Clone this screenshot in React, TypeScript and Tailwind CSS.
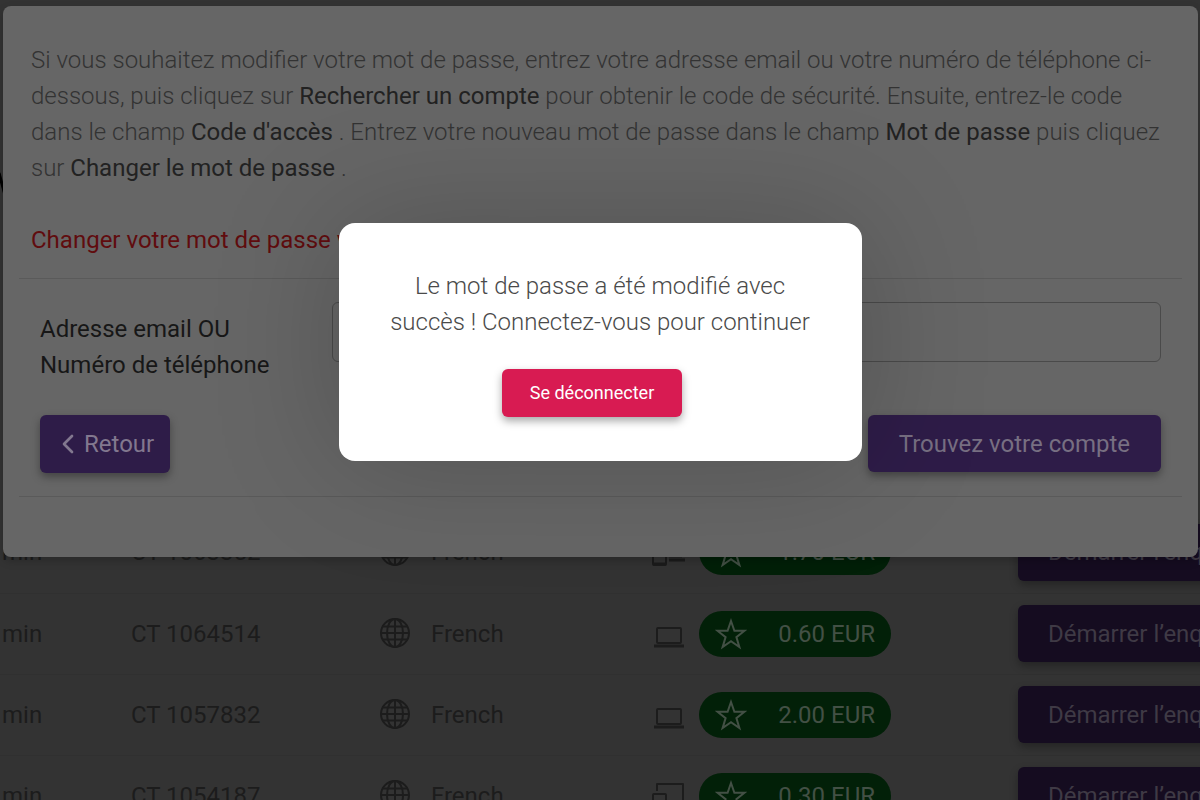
import { ChevronLeft } from "lucide-react";

const surveys = [
  { id: 'CT 1063352', language: 'French', reward: '1.70 EUR', device: 'phone' },
  { id: 'CT 1064514', language: 'French', reward: '0.60 EUR', device: 'laptop' },
  { id: 'CT 1057832', language: 'French', reward: '2.00 EUR', device: 'laptop' },
  { id: 'CT 1054187', language: 'French', reward: '0.30 EUR', device: 'tablet' },
];

const GlobeIcon = () => (
  <svg className="size-8" viewBox="0 0 32 32" fill="none" stroke="currentColor" strokeWidth="2">
    <circle cx="16" cy="15" r="14" />
    <ellipse cx="16" cy="15" rx="8" ry="14" />
    <path d="M16 1v28M2 15h28M4 8.5h24M4 21.5h24" />
  </svg>
)

const StarIcon = () => (
  <svg className="size-8" viewBox="0 0 32 32" fill="none" stroke="currentColor" strokeWidth="2">
    <path d="M16 3l3.4 9.8H29.5l-8.1 6.3 3 10L16 23.2 7.6 29.1l3-10L2.5 12.8h10.1z" />
  </svg>
)

const DeviceIcon = ({device}: {device: string}) => (
  <svg className="w-9 h-8" viewBox="0 0 36 32" fill="none" stroke="currentColor" strokeWidth="2" strokeLinejoin="round">
    {device === 'laptop' && (
      <>
        <rect x="6" y="10" width="24" height="15" rx="1" />
        <path d="M3 28h30" strokeWidth="3" />
      </>
    )}
    {device === 'phone' && (
      <>
        <path d="M7 12V4h24v13" />
        <rect x="2" y="12" width="13" height="17" rx="1" />
        <path d="M2 28h13M18 20h13M18 24h16" strokeWidth="3" />
      </>
    )}
    {device === 'tablet' && (
      <>
        <path d="M6 11V4h26v18H17" />
        <rect x="2" y="14" width="13" height="16" rx="1" />
      </>
    )}
  </svg>
)

const SurveyTable = () => (
  <table className="w-[1360px] table-fixed border-collapse text-[#1c1c1c]">
    <tbody>
      {surveys.map((survey) => (
        <tr key={survey.id} className="h-[81px] border-b border-[#303030]">
          <td className="w-[131px] pl-[2px]">min</td>
          <td className="w-[248px]">{survey.id}</td>
          <td className="w-[272px]">
            <div className="flex items-center gap-5"><GlobeIcon />{survey.language}</div>
          </td>
          <td className="w-[367px]">
            <div className="flex items-center gap-3">
              <DeviceIcon device={survey.device} />
              <div className="flex items-center justify-between w-48 h-[46px] rounded-full bg-[#022008] px-4 text-[#435045]">
                <StarIcon />
                {survey.reward}
              </div>
            </div>
          </td>
          <td>
            <button type="button" className="h-[57px] px-[30px] rounded-md bg-[#150c20] text-[#3f3a45] whitespace-nowrap shadow-[0_4px_8px_rgba(0,0,0,0.3)]">Démarrer l’enquête</button>
          </td>
        </tr>
      ))}
    </tbody>
  </table>
)

const PasswordPanel = () => (
  <section className="absolute inset-x-0 top-[6px] ml-[3px] mr-[2px] rounded-lg bg-[#666666] px-4 pt-9 pb-[60px] shadow-[0_4px_10px_rgba(0,0,0,0.2)]">
    <p className="px-3 font-light text-[#333333]">
      Si vous souhaitez modifier votre mot de passe, entrez votre adresse email ou votre numéro de téléphone ci-dessous, puis cliquez sur <b className="font-normal text-[#222222]">Rechercher un compte</b> pour obtenir le code de sécurité. Ensuite, entrez-le code dans le champ <b className="font-normal text-[#222222]">Code d'accès</b> . Entrez votre nouveau mot de passe dans le champ <b className="font-normal text-[#222222]">Mot de passe</b> puis cliquez sur <b className="font-normal text-[#222222]">Changer le mot de passe</b> .
    </p>
    <p className="mt-9 px-3 text-[#600c0e]">Changer votre mot de passe via</p>
    <form className="mt-5 border-y border-[#5a5a5a] px-[21px] py-[23px]">
      <div className="flex items-start">
        <label htmlFor="account" className="w-[292px] pt-[9px] text-[#171717]">Adresse email OU<br />Numéro de téléphone</label>
        <input id="account" type="text" className="h-[60px] min-w-0 flex-1 rounded-md border border-[#4a4a4a] bg-transparent px-4 outline-0" />
      </div>
      <div className="mt-8 flex items-start justify-between">
        <button type="button" className="flex h-[58px] items-center rounded-md bg-[#2e1c48] pl-3 pr-4 text-[#82788f] shadow-[0_4px_8px_rgba(0,0,0,0.35)]">
          <ChevronLeft className="size-8" />Retour
        </button>
        <button type="button" className="h-[57px] rounded-md bg-[#2e1c48] px-[31px] text-[#776f82] shadow-[0_4px_8px_rgba(0,0,0,0.35)]">Trouvez votre compte</button>
      </div>
    </form>
  </section>
)

const SuccessDialog = () => (
  <div role="dialog" aria-modal="true" className="absolute top-[223px] inset-x-0 mx-auto w-[523px] rounded-2xl bg-white px-12 pt-[45px] pb-11 text-center shadow-[0_0_130px_rgba(0,0,0,0.2)]">
    <p className="font-light text-[#4a4a4a]">Le mot de passe a été modifié avec succès ! Connectez-vous pour continuer</p>
    <button type="button" className="mt-[29px] mr-4 h-12 rounded-md bg-[#d81b52] px-7 text-lg text-white shadow-[0_4px_8px_rgba(0,0,0,0.35)]">Se déconnecter</button>
  </div>
)

const App = () => {
  return (
    <main className="relative h-screen overflow-hidden bg-[#333333] pt-[512px] font-['Roboto',sans-serif] text-2xl leading-9">
      {/* tip of the arrow that sticks out behind the panel */}
      <svg className="absolute left-0 top-[172px] w-2 h-6" viewBox="0 0 8 24" fill="none" stroke="black" strokeWidth="3">
        <path d="M-1 1l6 22" />
      </svg>
      <SurveyTable />
      <PasswordPanel />
      <SuccessDialog />
    </main>
  )
}

export default App
